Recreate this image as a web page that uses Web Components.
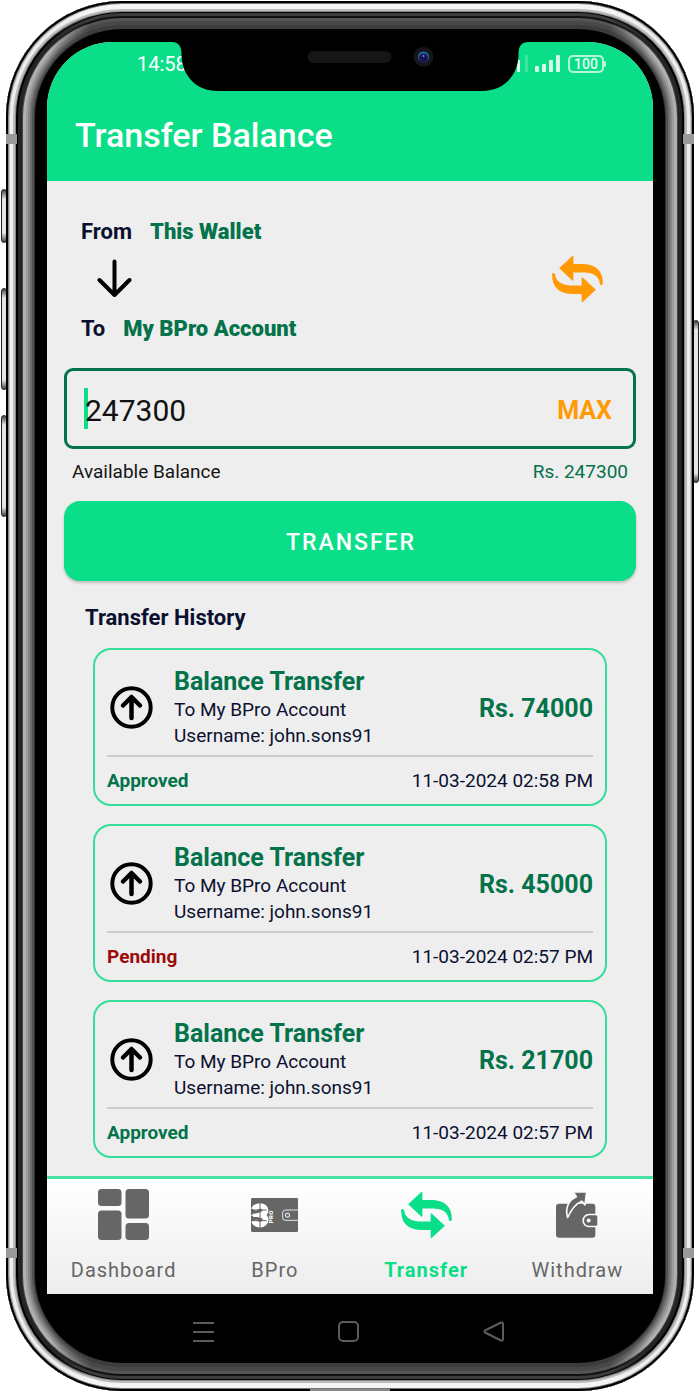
<!DOCTYPE html>
<html lang="en">
<head>
<meta charset="utf-8">
<meta name="viewport" content="width=device-width, initial-scale=1">
<title>Transfer Balance</title>
<style>
  body { margin: 0; background: #fff; font-family: Roboto, "Liberation Sans", sans-serif; color: #0b1030; }
</style>
</head>
<body>
<phone-shell>
  <app-header slot="top" time="14:58" battery="100">Transfer Balance</app-header>
  <main>
    <transfer-form>
      <transfer-route from="This Wallet" to="My BPro Account"></transfer-route>
      <amount-field value="247300" available="Rs. 247300"></amount-field>
    </transfer-form>
    <transfer-history>
      <transfer-card amount="Rs. 74000" status="Approved" date="11-03-2024 02:58 PM"></transfer-card>
      <transfer-card amount="Rs. 45000" status="Pending" date="11-03-2024 02:57 PM"></transfer-card>
      <transfer-card amount="Rs. 21700" status="Approved" date="11-03-2024 02:57 PM"></transfer-card>
    </transfer-history>
  </main>
  <tab-bar slot="bottom">
    <tab-item icon="dashboard">Dashboard</tab-item>
    <tab-item icon="bpro">BPro</tab-item>
    <tab-item icon="swap" active>Transfer</tab-item>
    <tab-item icon="withdraw">Withdraw</tab-item>
  </tab-bar>
  <system-nav slot="bottom"></system-nav>
</phone-shell>

<script>
const ICONS = {
  swap: `<svg width="51" height="46" viewBox="0 0 153 139" fill="currentColor"><path d="M21 37 60 1Q64-2 64 3V24H95C132 25 153 46 153 80V84Q153 88 149 88 145 88 144 83C142 64 128 52 100 50H64V72Q64 77 60 73Z"/><path transform="rotate(180 76.5 69.5)" d="M21 37 60 1Q64-2 64 3V24H95C132 25 153 46 153 80V84Q153 88 149 88 145 88 144 83C142 64 128 52 100 50H64V72Q64 77 60 73Z"/></svg>`,
  down: `<svg width="35" height="39" viewBox="0 0 35 39" fill="none" stroke="#000" stroke-width="4" stroke-linecap="round" stroke-linejoin="round"><path d="M17.500 2.500V36M2.500 21 17.500 36 32.500 21"/></svg>`,
  up: `<svg width="43" height="43" viewBox="0 0 43 43" fill="none" stroke="#000" stroke-width="4" stroke-linecap="round" stroke-linejoin="round"><circle cx="21.500" cy="21.500" r="19.200"/><path stroke-width="4.500" d="M21.500 32V11.500M13 19.500 21.500 11 30 19.500"/></svg>`,
  dashboard: `<svg width="51" height="51" viewBox="0 0 51 51" fill="currentColor"><rect width="23.500" height="17" rx="3.500"/><rect x="27.500" width="23.500" height="29.500" rx="3.500"/><rect y="21.500" width="23.500" height="29.500" rx="3.500"/><rect x="27.500" y="34" width="23.500" height="17" rx="3.500"/></svg>`,
  bpro: `<svg width="48" height="34" viewBox="0 0 144 102"><rect width="141" height="102" rx="4" fill="#666"/><g fill="none" stroke="#fff"><path stroke-width="17" d="M8 35C13 25 19 24 27 24 46 24 50 45 30 51 51 56 47 80 27 80 18 80 12 77 8 68"/><path stroke-width="10" d="M6 52H32"/><path stroke-width="2.500" d="M143 36H103Q95 36 95 44V59Q95 67 103 67H143"/><rect x="104" y="46" width="11" height="11" rx="2" stroke-width="3"/></g><path d="M0 36H47M0 68H47M27 11V92" stroke="#666" stroke-width="3"/><g transform="translate(55 76) rotate(-90)"><text x="0" y="10" font-family="Roboto, sans-serif" font-size="18" font-weight="900" fill="#fff">PRO</text></g></svg>`,
  withdraw: `<svg width="42" height="47" viewBox="0 0 126 140"><rect y="38" width="118" height="102" rx="9" fill="#666"/><path d="M35 79C26 49 39 27 61 17L51 2H92L87 41 77 30C57 38 46 54 35 79Z" fill="#666" stroke="#f9f9f9" stroke-width="5" stroke-linejoin="round"/><path d="M126 68H99A20 20 0 0 0 99 108H126Z" fill="#f9f9f9"/><path d="M119 72H100A16 16 0 0 0 100 104H119Q124 104 124 99V77Q124 72 119 72Z" fill="#666"/><circle cx="98" cy="88" r="6" fill="#f9f9f9"/></svg>`
};

class Base extends HTMLElement {
  connectedCallback() {
    if (!this.shadowRoot) this.attachShadow({ mode: 'open' }).innerHTML = this.render();
  }
  at(name) { return this.getAttribute(name) || ''; }
}

customElements.define('phone-shell', class extends Base {
  render() { return `<style>
    :host { display: block; position: relative; margin: 1px 6px 0; }
    .body { position: relative; background: #000; border-radius: 116px; padding: 41px 41px 29px;
      box-shadow: inset 0 0 0 2px #000, inset 0 0 0 3px #888, inset 0 0 0 4px #ccc, inset 0 0 0 7px #eee, inset 0 0 0 9px #bbb, inset 0 0 0 10px #888,
        inset 0 0 0 12px #000, inset 0 0 0 16px #242424, inset 0 0 0 17px #444, inset 0 0 0 20px #b0b0b0, inset 0 0 0 22px #9c9c9c, inset 0 0 0 24px #868686,
        inset 0 0 0 26px #6c6c6c, inset 0 0 0 28px #525252, inset 0 0 0 29px #333; }
    .body::before { content: ""; position: absolute; inset: 0; border-radius: 116px;
      -webkit-mask-image: linear-gradient(to right, transparent 44px, #000 84px, #000 calc(100% - 84px), transparent calc(100% - 44px));
      mask-image: linear-gradient(to right, transparent 44px, #000 84px, #000 calc(100% - 84px), transparent calc(100% - 44px));
      box-shadow: inset 0 0 0 2px #000, inset 0 0 0 3px #777, inset 0 0 0 8px #f4f4f4, inset 0 0 0 10px #bbb, inset 0 0 0 11px #888,
        inset 0 0 0 12px #000, inset 0 0 0 15px #3c3c3c, inset 0 0 0 17px #111, inset 0 0 0 20px #555, inset 0 0 0 24px #484848, inset 0 0 0 28px #3c3c3c, inset 0 0 0 30px #000; }
    .screen { position: relative; background: #eee; border-radius: 66px 66px 0 0; overflow: hidden; }
    .notch { position: absolute; top: 0; left: 50%; transform: translateX(-50%); display: block; }
    .key { position: absolute; width: 6px; border-radius: 3px; box-sizing: border-box; border: 1px solid #222; background: linear-gradient(#444, #e4e4e4 9px, #e4e4e4 calc(100% - 9px), #444); }
    .left { left: -5px; } .right { right: -5px; }
    .band { position: absolute; width: 11px; height: 10px; background: #9a9a9a; }
    .port { position: absolute; left: calc(50% - 40px); bottom: 0; width: 80px; height: 2px; background: #888; }
  </style>
  <i class="key left" style="top:188px;height:54px"></i><i class="key left" style="top:287px;height:102px"></i>
  <i class="key left" style="top:414px;height:102px"></i><i class="key right" style="top:319px;height:163px"></i>
  <div class="body">
    <i class="band" style="left:0;top:133px"></i><i class="band" style="right:0;top:133px"></i>
    <i class="band" style="left:0;bottom:133px"></i><i class="band" style="right:0;bottom:133px"></i><i class="port"></i>
    <div class="screen"><slot name="top"></slot><slot></slot>
      <svg class="notch" width="357" height="49" viewBox="0 0 357 49"><path d="M0 0C7 0 10 4 10 12V14C11 34 25 49 46 49H311C332 49 346 34 347 14V12C347 4 350 0 357 0Z"/>
        <rect x="136" y="9" width="84" height="12" rx="6" fill="#151515"/><path d="M141 13H216M141 17H216" stroke="#262626" stroke-dasharray="1 2"/>
        <circle cx="252" cy="15" r="10" fill="#161619"/><circle cx="252" cy="15" r="5.500" fill="#2468a8"/><circle cx="252" cy="16" r="4.500" fill="#191450"/><circle cx="252" cy="14" r="1" fill="#7a8cc0"/></svg>
    </div>
    <slot name="bottom"></slot>
  </div>`; }
});

customElements.define('app-header', class extends Base {
  render() { return `<style>
    :host { display: block; background: #0bde88; color: #fff; }
    .status { display: flex; align-items: center; justify-content: space-between; height: 43px; padding: 0 47px 0 90px; font-size: 20px; }
    .right { display: flex; align-items: center; gap: 8px; }
    h1 { margin: 0; padding: 4px 28px 0; height: 92px; display: flex; align-items: center; font-size: 34px; font-weight: 500; }
    svg { display: block; }
    .battery { position: relative; box-sizing: border-box; width: 36px; height: 18px; border: 2px solid #b8f6dc; border-radius: 5px; font-size: 14px; line-height: 14px; font-weight: 500; text-align: center; color: #e2fff2; margin-right: 2px; }
    .battery::after { content: ""; position: absolute; right: -4px; top: 4px; width: 2px; height: 6px; background: #b8f6dc; border-radius: 1px; }
  </style>
  <div class="status"><span>${this.at('time')}</span><span class="right">
    <svg width="43" height="18" viewBox="0 0 43 18" fill="#d5faea"><path d="M0 5H3V17H0Z"/><path d="M8 0H11V17H8Z" opacity=".25"/><rect x="18" y="11" width="4" height="6" rx="1"/><rect x="25" y="9" width="4" height="8" rx="1"/><rect x="32" y="5" width="4" height="12" rx="1"/><rect x="39" width="4" height="17" rx="1"/></svg>
    <span class="battery">${this.at('battery')}</span></span></div>
  <h1><slot></slot></h1>`; }
});

customElements.define('transfer-form', class extends Base {
  render() { return `<style>
    :host { display: block; padding: 38px 17px 0; }
    button { display: block; width: 100%; height: 80px; margin-top: 17px; padding: 2px 0 0; border: 0; border-radius: 16px; background: #0bde88; color: #fff; font: 500 23px Roboto, sans-serif; letter-spacing: 2px; text-indent: 2px; box-shadow: 0 2px 3px #0003; }
  </style><slot></slot><button type="button">TRANSFER</button>`; }
});

customElements.define('transfer-route', class extends Base {
  render() { return `<style>
    :host { display: flex; align-items: flex-start; justify-content: space-between; padding: 0 33px 0 17px; font-size: 22px; line-height: 26px; font-weight: 700; }
    p { margin: 0; display: flex; gap: 18px; }
    b { color: #04724a; }
    .arrow { box-sizing: border-box; height: 71px; padding: 14px 0 0 16px; }
    button { margin-top: 37px; padding: 0; border: 0; background: none; color: #ff9a05; display: block; }
    svg { display: block; }
  </style>
  <div><p>From <b>${this.at('from')}</b></p><div class="arrow">${ICONS.down}</div><p>To <b>${this.at('to')}</b></p></div>
  <button type="button" aria-label="Swap direction">${ICONS.swap}</button>`; }
});

customElements.define('amount-field', class extends Base {
  render() { return `<style>
    :host { display: block; margin-top: 26px; }
    .box { position: relative; display: flex; align-items: center; box-sizing: border-box; height: 81px; padding: 3px 21px 0 18px; border: 3px solid #04724a; border-radius: 9px; }
    .box::before { content: ""; position: absolute; left: 17px; top: 17px; width: 4px; height: 41px; background: #0bde88; }
    input { position: relative; flex: 1; min-width: 0; padding: 0; border: 0; outline: 0; background: none; font: 30px Roboto, sans-serif; color: #111; }
    button { padding: 0; border: 0; background: none; color: #ff9a05; font: 700 25px Roboto, sans-serif; }
    .info { display: flex; justify-content: space-between; margin-top: 11px; padding: 0 8px; font-size: 19px; line-height: 24px; color: #151515; }
    output { color: #04724a; }
  </style>
  <div class="box"><input id="amount" aria-label="Amount" inputmode="numeric" value="${this.at('value')}"><button type="button">MAX</button></div>
  <div class="info"><span>Available Balance</span><output for="amount">${this.at('available')}</output></div>`; }
});

customElements.define('transfer-history', class extends Base {
  render() { return `<style>
    :host { display: block; padding: 25px 46px 18px; }
    h2 { margin: 0 0 18px -8px; font-size: 22px; line-height: 24px; font-weight: 700; }
    .list { display: grid; gap: 18px; }
  </style><h2>Transfer History</h2><div class="list"><slot></slot></div>`; }
});

customElements.define('transfer-card', class extends Base {
  render() { return `<style>
    :host { display: block; border: 2px solid #35dd98; border-radius: 18px; padding: 0 12px; }
    .top { display: flex; align-items: center; padding: 16px 0 6px; border-bottom: 2px solid #cbcbcb; }
    svg { display: block; margin: 0 21px 0 3px; }
    .text { flex: 1; font-size: 19px; line-height: 26px; }
    h3 { margin: 0; font-size: 25px; line-height: 31px; font-weight: 700; color: #04724a; }
    p { margin: 0; }
    .amount { padding-top: 2px; font-size: 25px; font-weight: 700; color: #04724a; }
    .foot { display: flex; align-items: center; justify-content: space-between; height: 47px; font-size: 19px; }
    .foot b { color: #04724a; }
    .foot b.Pending { color: #9c0a0a; }
  </style>
  <div class="top">${ICONS.up}<div class="text"><h3>Balance Transfer</h3><p>To My BPro Account</p><p>Username: john.sons91</p></div><span class="amount">${this.at('amount')}</span></div>
  <div class="foot"><b class="${this.at('status')}">${this.at('status')}</b><time>${this.at('date')}</time></div>`; }
});

customElements.define('tab-bar', class extends Base {
  render() { return `<style>
    :host { position: relative; display: grid; grid-template-columns: repeat(4, 1fr); box-sizing: border-box; height: 118px; padding-left: 1px; border-top: 3px solid #45e2a0; background: linear-gradient(#fff, #ededed); }
  </style><slot></slot>`; }
});

customElements.define('tab-item', class extends Base {
  render() { return `<style>
    :host { display: block; }
    a { display: flex; flex-direction: column; align-items: center; color: #666; text-decoration: none; font-size: 20px; line-height: 24px; letter-spacing: 1px; }
    :host([active]) a { color: #0bde88; font-weight: 700; }
    .icon { height: 51px; display: flex; align-items: center; margin: 10px 0 18px; }
    svg { display: block; }
  </style><a href="#"><span class="icon">${ICONS[this.at('icon')]}</span><slot></slot></a>`; }
});

customElements.define('system-nav', class extends Base {
  render() { return `<style>
    :host { position: relative; display: flex; justify-content: center; align-items: center; gap: 124px; height: 68px; padding: 6px 3px 0 0; box-sizing: border-box; }
    button { padding: 0; border: 0; background: none; display: block; }
    svg { display: block; fill: none; stroke: #5c5c5c; stroke-width: 2; stroke-linejoin: round; }
  </style>
  <button type="button" aria-label="Recent apps"><svg width="21" height="21"><path d="M0 2H21M0 11H21M0 20H21"/></svg></button>
  <button type="button" aria-label="Home"><svg width="21" height="21"><rect x="1" y="1" width="19" height="19" rx="4"/></svg></button>
  <button type="button" aria-label="Back"><svg width="21" height="21"><path d="M18 1.500Q20 1 20 3V18Q20 20 18 19.500L2 11.500Q1 10.500 2 9.500Z"/></svg></button>`; }
});
</script>
</body>
</html>
